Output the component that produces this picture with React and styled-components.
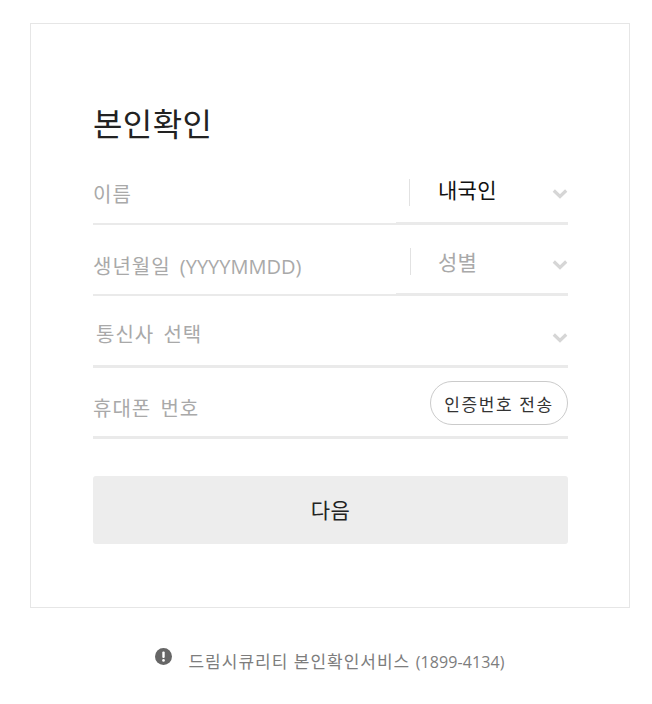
import React from "react";
import styled, { createGlobalStyle } from "styled-components";

const Global = createGlobalStyle`
  html, body { margin: 0; padding: 0; background: #fff; }
  body { font-family: "Open Sans", "Noto Sans CJK KR", sans-serif; }
  * { box-sizing: border-box; }
`;
const Page = styled.div`
  width: 652px;
  height: 704px;
  padding: 23px 22px 0 30px;
  overflow: hidden;
`;
const Card = styled.section`
  width: 600px;
  height: 585px;
  border: 1px solid #e6e6e6;
  padding: 77px 61px 0 62px;
`;
const Title = styled.h1`
  margin: 0 0 7px;
  height: 46px;
  font-size: 32px;
  line-height: 46px;
  font-weight: 400;
  letter-spacing: 0.4px;
  color: #222;
`;
const Row = styled.div`
  display: flex;
  align-items: stretch;
  height: ${(p) => p.$h}px;
`;
const Field = styled.div`
  flex: 1;
  min-width: 0;
  display: flex;
  align-items: center;
  justify-content: space-between;
  padding-top: ${(p) => p.$top || 0}px;
  padding-left: ${(p) => p.$indent || 0}px;
  border-bottom: ${(p) => p.$line || 3}px solid #eaeaea;
  font-size: 20px;
  letter-spacing: 1px;
  word-spacing: 3px;
  color: #a9a9a9;
`;
const Latin = styled.span`
  letter-spacing: 0;
  word-spacing: 0;
`;
const SelectCell = styled.div`
  width: 172px;
  display: flex;
  align-items: flex-start;
  border-bottom: 3px solid #eaeaea;
`;
const Divider = styled.span`
  width: 1px;
  height: 27px;
  margin: ${(p) => p.$top}px 0 0 ${(p) => p.$left}px;
  background: #e2e2e2;
`;
const SelectValue = styled.span`
  flex: 1;
  margin: ${(p) => p.$top}px 0 0 ${(p) => p.$left}px;
  font-size: 21px;
  line-height: 28px;
  letter-spacing: 0.3px;
  color: ${(p) => (p.$filled ? "#111" : "#a9a9a9")};
`;
const Chevron = styled.svg`
  flex: none;
  align-self: flex-start;
  width: 16px;
  height: 10px;
  margin: ${(p) => p.$top}px 0 0 0;
  fill: none;
  stroke: #d6d6d6;
  stroke-width: 3.2;
`;
const PillButton = styled.button`
  flex: none;
  align-self: flex-start;
  width: 138px;
  height: 44px;
  margin-top: 3px;
  padding: 0;
  border: 1px solid #cbcbcb;
  border-radius: 22px;
  background: #fff;
  font: inherit;
  font-size: 17px;
  letter-spacing: 1.6px;
  word-spacing: 0;
  color: #333;
`;
const NextButton = styled.button`
  display: block;
  width: 100%;
  height: 68px;
  margin-top: 37px;
  padding: 0 0 2px;
  border: 0;
  border-radius: 3px;
  background: #ededed;
  font: inherit;
  font-size: 21px;
  letter-spacing: 0.5px;
  color: #222;
`;
const Footer = styled.footer`
  display: flex;
  align-items: center;
  justify-content: center;
  margin: 40px 0 0;
  width: 600px;
  gap: 16px;
  font-size: 17px;
  letter-spacing: 1px;
  color: #7d7d7d;
`;
const FooterIcon = styled.svg`
  flex: none;
  width: 17px;
  height: 17px;
  margin-top: -8px;
`;
const Number = styled.span`
  font-size: 16px;
  letter-spacing: 0.1px;
`;
const Arrow = ({ top }) => (
  <Chevron $top={top} viewBox="0 0 16 10"><path d="M1.8 1.5 L8 7.5 L14.2 1.5" /></Chevron>
);

export default function App() {
  return (
    <Page>
      <Global />
      <Card>
        <Title>본인확인</Title>
        <Row $h={71}>
          <Field $line={2} $top={10}>이름</Field>
          <SelectCell>
            <Divider $left={13} $top={25} />
            <SelectValue $filled $left={28} $top={22}>내국인</SelectValue>
            <Arrow top={35} />
          </SelectCell>
        </Row>
        <Row $h={71}>
          <Field $line={2} $top={12}><span>생년월일 <Latin>(YYYYMMDD)</Latin></span></Field>
          <SelectCell>
            <Divider $left={14} $top={23} />
            <SelectValue $left={27} $top={23}>성별</SelectValue>
            <Arrow top={35} />
          </SelectCell>
        </Row>
        <Row $h={72}>
          <Field $top={6} $indent={3}>통신사 선택<Arrow top={31} /></Field>
        </Row>
        <Row $h={71}>
          <Field $top={10}>휴대폰 번호<PillButton>인증번호 전송</PillButton></Field>
        </Row>
        <NextButton>다음</NextButton>
      </Card>
      <Footer>
        <FooterIcon viewBox="0 0 17 17" aria-hidden="true">
          <circle cx="8.5" cy="8.5" r="8.5" fill="#666" />
          <rect x="7.3" y="3.5" width="2.4" height="6.5" rx="1" fill="#fff" />
          <circle cx="8.5" cy="12.4" r="1.3" fill="#fff" />
        </FooterIcon>
        <span>드림시큐리티 본인확인서비스 <Number>(1899-4134)</Number></span>
      </Footer>
    </Page>
  );
}
